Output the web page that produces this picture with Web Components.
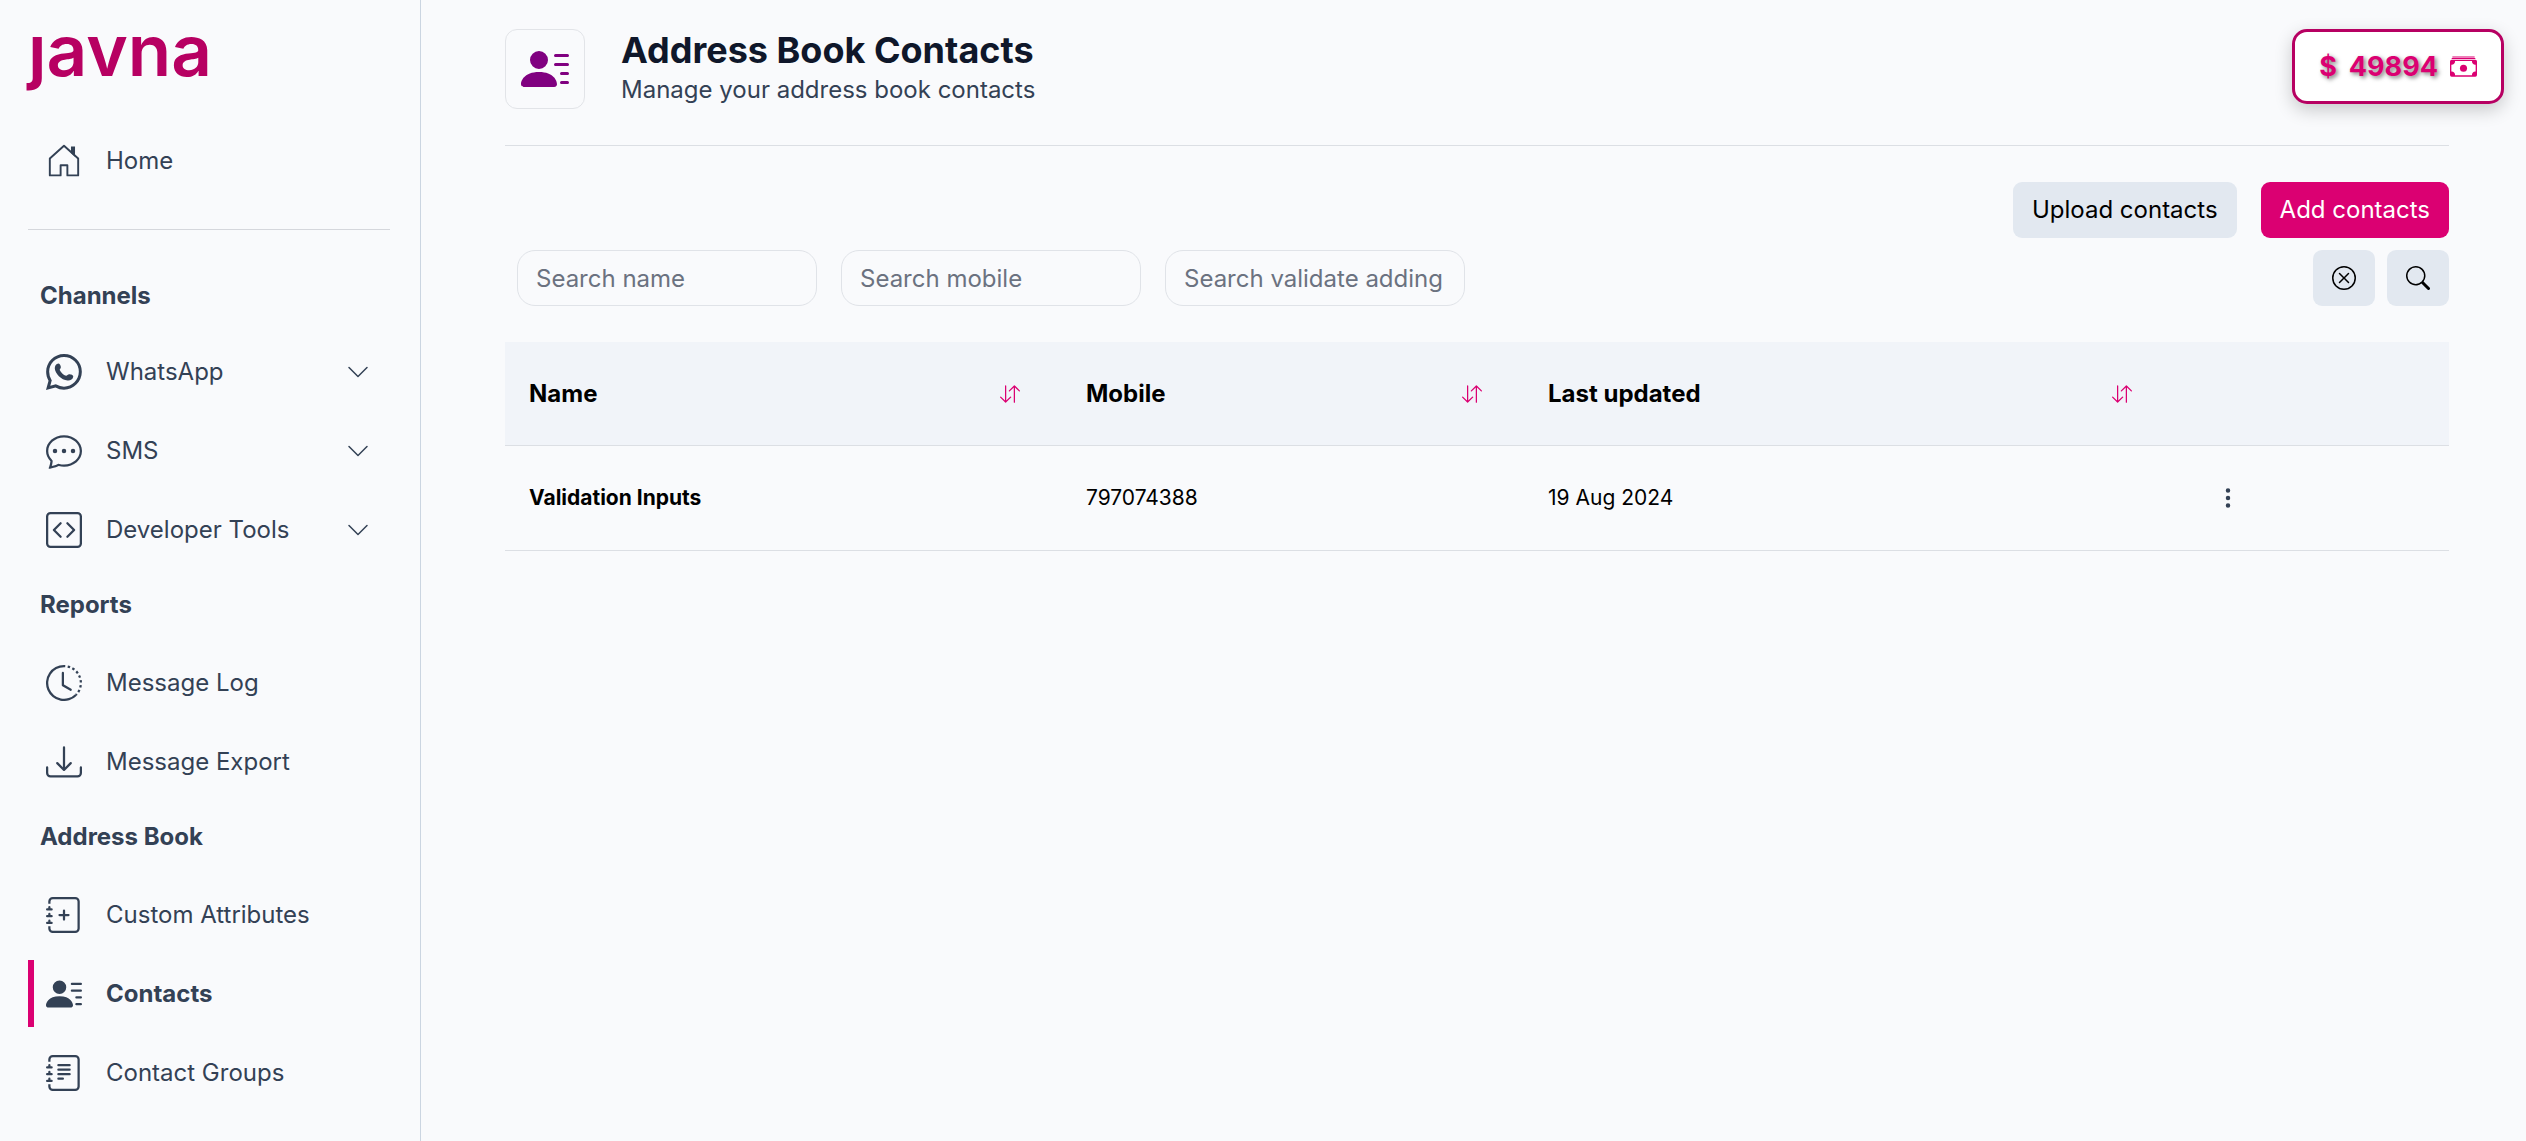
<!DOCTYPE html>
<html lang="en">
<head>
<meta charset="utf-8">
<title>Address Book Contacts</title>
<style>
  :root {
    --ink: #334155;
    --line: #dcdfe4;
    --pink: #db0072;
    --berry: #b70062;
    --soft: #e2e8f0;
  }
  body {
    margin: 0;
    background: #f9fafc;
    color: var(--ink);
    font: 400 24px/36px Inter, "Liberation Sans", sans-serif;
  }
</style>
</head>
<body>
<app-shell>
  <side-nav slot="nav">
    <nav-item icon="home" slot="home">Home</nav-item>
    <nav-group heading="Channels">
      <nav-item icon="whatsapp" expandable>WhatsApp</nav-item>
      <nav-item icon="chat" expandable>SMS</nav-item>
      <nav-item icon="code" expandable>Developer Tools</nav-item>
    </nav-group>
    <nav-group heading="Reports">
      <nav-item icon="history">Message Log</nav-item>
      <nav-item icon="download">Message Export</nav-item>
    </nav-group>
    <nav-group heading="Address Book">
      <nav-item icon="journal-plus">Custom Attributes</nav-item>
      <nav-item icon="person" active>Contacts</nav-item>
      <nav-item icon="journal-text">Contact Groups</nav-item>
    </nav-group>
  </side-nav>
  <page-header icon="person">
    <span slot="title">Address Book Contacts</span>
    <span slot="subtitle">Manage your address book contacts</span>
  </page-header>
  <contact-toolbar></contact-toolbar>
  <contact-table></contact-table>
</app-shell>
<balance-badge>49894</balance-badge>

<script>
const ICONS = {
  home: '<path fill="none" stroke="currentColor" stroke-width=".85" stroke-linejoin="round" d="M1.7 6.9v7.5h4.8V9.9h3v4.5h4.8V6.9L8 1.2z"/><path d="M11.1 1.6h1.8v4.5l-1.8-1.7z"/>',
  whatsapp: '<path d="M13.601 2.326A7.854 7.854 0 0 0 7.994 0C3.627 0 .068 3.558.064 7.926c0 1.399.366 2.76 1.057 3.965L0 16l4.204-1.102a7.933 7.933 0 0 0 3.79.965h.004c4.368 0 7.926-3.558 7.93-7.93A7.898 7.898 0 0 0 13.6 2.326zM7.994 14.521a6.573 6.573 0 0 1-3.356-.92l-.24-.144-2.494.654.666-2.433-.156-.251a6.56 6.56 0 0 1-1.007-3.505c0-3.626 2.957-6.584 6.591-6.584a6.56 6.56 0 0 1 4.66 1.931 6.557 6.557 0 0 1 1.928 4.66c-.004 3.639-2.961 6.592-6.592 6.592z"/><path d="M5.2 4.3C6 4.1 6.6 5.200 6.600 5.900c0 .6-.5.8-.5 1.200.5 1.100 1.600 2.200 2.800 2.600.4.100.8-.7 1.400-.7.800 0 2 .4 1.800 1.100-.2 1.200-1.300 1.800-2.500 1.700C6.800 11.500 4 8.700 3.900 6.300c0-1 .5-1.800 1.300-2z"/>',
  chat: '<path d="M5 8a1 1 0 1 1-2 0 1 1 0 0 1 2 0zm4 0a1 1 0 1 1-2 0 1 1 0 0 1 2 0zm3 1a1 1 0 1 0 0-2 1 1 0 0 0 0 2z"/><path d="m2.165 15.803.02-.004c1.830-.363 2.948-.842 3.468-1.105A9.060 9.060 0 0 0 8 15c4.418 0 8-3.134 8-7s-3.582-7-8-7-8 3.134-8 7c0 1.760.743 3.370 1.970 4.600a10.437 10.437 0 0 1-.524 2.318l-.003.011a10.722 10.722 0 0 1-.244.637c-.079.186.074.394.273.362a21.673 21.673 0 0 0 .693-.125zm.800-3.108a1 1 0 0 0-.287-.801C1.618 10.830 1 9.468 1 8c0-3.192 3.004-6 7-6s7 2.808 7 6c0 3.193-3.004 6-7 6a8.060 8.060 0 0 1-2.088-.272 1 1 0 0 0-.711.074c-.387.196-1.240.570-2.634.893a10.970 10.970 0 0 0 .398-2z"/>',
  code: '<path d="M14 1a1 1 0 0 1 1 1v12a1 1 0 0 1-1 1H2a1 1 0 0 1-1-1V2a1 1 0 0 1 1-1h12zM2 0a2 2 0 0 0-2 2v12a2 2 0 0 0 2 2h12a2 2 0 0 0 2-2V2a2 2 0 0 0-2-2H2z"/><path d="M6.854 4.646a.5.5 0 0 1 0 .708L4.207 8l2.647 2.646a.5.5 0 0 1-.708.708l-3-3a.5.5 0 0 1 0-.708l3-3a.5.5 0 0 1 .708 0zm2.292 0a.5.5 0 0 0 0 .708L11.793 8l-2.647 2.646a.5.5 0 0 0 .708.708l3-3a.5.5 0 0 0 0-.708l-3-3a.5.5 0 0 0-.708 0z"/>',
  history: '<path d="M8.515 1.019A7 7 0 0 0 8 1V0a8 8 0 0 1 .589.022l-.074.997zm2.004.450a7.003 7.003 0 0 0-.985-.299l.219-.976c.383.086.760.200 1.126.342l-.360.933zm1.370.710a7.010 7.010 0 0 0-.439-.270l.493-.870a8.025 8.025 0 0 1 .979.654l-.615.789a6.996 6.996 0 0 0-.418-.302zm1.834 1.790a6.990 6.990 0 0 0-.653-.796l.724-.690c.270.285.520.590.747.910l-.818.576zm.744 1.352a7.080 7.080 0 0 0-.214-.468l.893-.450a7.976 7.976 0 0 1 .450 1.088l-.950.313a7.023 7.023 0 0 0-.179-.483zm.530 2.507a6.991 6.991 0 0 0-.100-1.025l.985-.170c.067.386.106.778.116 1.170l-1 .025zm-.131 1.538c.033-.170.060-.339.081-.510l.993.123a7.957 7.957 0 0 1-.230 1.155l-.964-.267c.046-.165.086-.332.120-.501zm-.952 2.379c.184-.290.346-.594.486-.908l.914.405c-.160.360-.345.706-.555 1.038l-.845-.535zm-.964 1.205c.122-.122.239-.248.350-.378l.758.653a8.073 8.073 0 0 1-.401.432l-.707-.707z"/><path d="M8 1a7 7 0 1 0 4.950 11.950l.707.707A8.001 8.001 0 1 1 8 0v1z"/><path d="M7.500 3a.5.5 0 0 1 .5.500v5.210l3.248 1.856a.5.5 0 0 1-.496.868l-3.500-2A.5.5 0 0 1 7 9V3.500a.5.5 0 0 1 .5-.5z"/>',
  download: '<path d="M.5 9.900a.5.5 0 0 1 .5.500v2.500a1 1 0 0 0 1 1h12a1 1 0 0 0 1-1v-2.500a.5.5 0 0 1 1 0v2.500a2 2 0 0 1-2 2H2a2 2 0 0 1-2-2v-2.500a.5.5 0 0 1 .5-.5z"/><path d="M7.646 11.854a.5.5 0 0 0 .708 0l3-3a.5.5 0 0 0-.708-.708L8.500 10.293V1.500a.5.5 0 0 0-1 0v8.793L5.354 8.146a.5.5 0 1 0-.708.708l3 3z"/>',
  journal: '<path d="M3 0h10a2 2 0 0 1 2 2v12a2 2 0 0 1-2 2H3a2 2 0 0 1-2-2v-1h1v1a1 1 0 0 0 1 1h10a1 1 0 0 0 1-1V2a1 1 0 0 0-1-1H3a1 1 0 0 0-1 1v1H1V2a2 2 0 0 1 2-2z"/><path d="M1 5v-.5a.5.5 0 0 1 1 0V5h.5a.5.5 0 0 1 0 1h-2a.5.5 0 0 1 0-1H1zm0 3v-.5a.5.5 0 0 1 1 0V8h.5a.5.5 0 0 1 0 1h-2a.5.5 0 0 1 0-1H1zm0 3v-.5a.5.5 0 0 1 1 0v.5h.5a.5.5 0 0 1 0 1h-2a.5.5 0 0 1 0-1H1z"/>',
  person: '<path d="M6 8a3 3 0 1 0 0-6 3 3 0 0 0 0 6zm-5 6s-1 0-1-1 1-4 6-4 6 3 6 4-1 1-1 1H1zM11 3.500a.5.5 0 0 1 .5-.5h4a.5.5 0 0 1 0 1h-4a.5.5 0 0 1-.5-.5zm.5 2.500a.5.5 0 0 0 0 1h4a.5.5 0 0 0 0-1h-4zm2 3a.5.5 0 0 0 0 1h2a.5.5 0 0 0 0-1h-2zm0 3a.5.5 0 0 0 0 1h2a.5.5 0 0 0 0-1h-2z"/>',
  chevron: '<path d="M1.646 4.646a.5.5 0 0 1 .708 0L8 10.293l5.646-5.647a.5.5 0 0 1 .708.708l-6 6a.5.5 0 0 1-.708 0l-6-6a.5.5 0 0 1 0-.708z"/>',
  clear: '<path d="M8 15A7 7 0 1 1 8 1a7 7 0 0 1 0 14zm0 1A8 8 0 1 0 8 0a8 8 0 0 0 0 16z"/><path d="M4.646 4.646a.5.5 0 0 1 .708 0L8 7.293l2.646-2.647a.5.5 0 0 1 .708.708L8.707 8l2.647 2.646a.5.5 0 0 1-.708.708L8 8.707l-2.646 2.647a.5.5 0 0 1-.708-.708L7.293 8 4.646 5.354a.5.5 0 0 1 0-.708z"/>',
  search: '<path d="M11.742 10.344a6.500 6.500 0 1 0-1.397 1.398h-.001c.030.040.062.078.098.115l3.850 3.850a1 1 0 0 0 1.415-1.414l-3.850-3.850a1.007 1.007 0 0 0-.115-.100zM12 6.500a5.500 5.500 0 1 1-11 0 5.500 5.500 0 0 1 11 0z"/>',
  sort: '<path d="M11.500 15a.5.5 0 0 0 .5-.5V2.707l3.146 3.147a.5.5 0 0 0 .708-.708l-4-4a.5.5 0 0 0-.708 0l-4 4a.5.5 0 1 0 .708.708L11 2.707V14.500a.5.5 0 0 0 .5.500zm-7-14a.5.5 0 0 1 .5.500v11.793l3.146-3.147a.5.5 0 0 1 .708.708l-4 4a.5.5 0 0 1-.708 0l-4-4a.5.5 0 0 1 .708-.708L4 13.293V1.500a.5.5 0 0 1 .5-.5z"/>',
  dots: '<path d="M9.500 13a1.500 1.500 0 1 1-3 0 1.500 1.500 0 0 1 3 0zm0-5a1.500 1.500 0 1 1-3 0 1.500 1.500 0 0 1 3 0zm0-5a1.500 1.500 0 1 1-3 0 1.500 1.500 0 0 1 3 0z"/>',
  cash: '<path d="M1.400 2h13.200v.600H1.400zM1 3h14v.500H1z"/><path fill-rule="evenodd" d="M1 4h14a1 1 0 0 1 1 1v8a1 1 0 0 1-1 1H1a1 1 0 0 1-1-1V5a1 1 0 0 1 1-1zm2 .800A2 2 0 0 1 .8 7v4A2 2 0 0 1 3 13.200h10A2 2 0 0 1 15.200 11V7A2 2 0 0 1 13 4.800z"/><circle cx="8" cy="9" r="2.100"/>'
};
ICONS['journal-plus'] = ICONS.journal + '<path d="M8 5.500a.5.5 0 0 1 .5.500v1.500H10a.5.5 0 0 1 0 1H8.500V10a.5.5 0 0 1-1 0V8.500H6a.5.5 0 0 1 0-1h1.500V6a.5.5 0 0 1 .5-.5z"/>';
ICONS['journal-text'] = ICONS.journal + '<path d="M5 10.500a.5.5 0 0 1 .5-.5h2a.5.5 0 0 1 0 1h-2a.5.5 0 0 1-.5-.5zm0-2a.5.5 0 0 1 .5-.5h5a.5.5 0 0 1 0 1h-5a.5.5 0 0 1-.5-.5zm0-2a.5.5 0 0 1 .5-.5h5a.5.5 0 0 1 0 1h-5a.5.5 0 0 1-.5-.5zm0-2a.5.5 0 0 1 .5-.5h5a.5.5 0 0 1 0 1h-5a.5.5 0 0 1-.5-.5z"/>';

class BaseElement extends HTMLElement {
  constructor() {
    super();
    this.attachShadow({ mode: 'open' });
  }
  connectedCallback() {
    this.shadowRoot.innerHTML = '<style>*{box-sizing:border-box}</style>' + this.render();
  }
}

customElements.define('ui-icon', class extends BaseElement {
  render() {
    return `<style>:host{display:block;flex:none;width:24px;height:24px}svg{display:block;width:100%;height:100%}</style>
      <svg viewBox="0 0 16 16" fill="currentColor" aria-hidden="true">${ICONS[this.getAttribute('name')]}</svg>`;
  }
});

customElements.define('app-shell', class extends BaseElement {
  render() {
    return `<style>
      :host{display:flex;min-height:100vh}
      main{flex:1;min-width:0;padding:29px 77px 0 84px}
    </style>
    <slot name="nav"></slot><main><slot></slot></main>`;
  }
});

customElements.define('side-nav', class extends BaseElement {
  render() {
    return `<style>
      :host{display:block;box-sizing:border-box;flex:none;width:421px;padding:20px 30px 20px 28px;border-right:1px solid #cbd5e1}
      .logo{display:block;color:var(--berry);font-size:71px;font-weight:600;line-height:60px;text-decoration:none}
      .home{margin-top:47px}
      hr{border:0;border-top:1px solid #d5d7dc;margin:35px 0 0}
    </style>
    <a class="logo" href="#" aria-label="javna">ȷavna</a>
    <div class="home"><slot name="home"></slot></div>
    <hr>
    <nav><slot></slot></nav>`;
  }
});

customElements.define('nav-group', class extends BaseElement {
  render() {
    return `<style>
      :host{display:block;margin-top:24px}
      :host(:first-of-type){margin-top:48px}
      h2{margin:0 0 26px;padding-left:12px;font-size:24px;line-height:36px;font-weight:700}
      :host(:first-of-type) h2{margin-bottom:24px}
      div{display:flex;flex-direction:column;gap:12px}
    </style>
    <h2>${this.getAttribute('heading')}</h2><div><slot></slot></div>`;
  }
});

customElements.define('nav-item', class extends BaseElement {
  render() {
    const inner = `<ui-icon class="lead" name="${this.getAttribute('icon')}"></ui-icon><span><slot></slot></span>`;
    return `<style>
      :host{display:block}
      a,button{display:flex;align-items:center;gap:24px;width:100%;height:67px;padding:0 20px 0 12px;border:0;border-left:6px solid transparent;background:none;color:inherit;font:inherit;text-align:left;text-decoration:none}
      span{flex:1}
      .lead{width:36px;height:36px}
      :host([active]) a{border-color:var(--pink);font-weight:700}
    </style>` + (this.hasAttribute('expandable')
      ? `<button type="button" aria-expanded="false">${inner}<ui-icon name="chevron"></ui-icon></button>`
      : `<a href="#">${inner}</a>`);
  }
});

customElements.define('page-header', class extends BaseElement {
  render() {
    return `<style>
      :host{display:flex;gap:36px;padding-bottom:36px;border-bottom:1px solid var(--line)}
      .tile{display:grid;place-items:center;width:80px;height:80px;border:1px solid #e2e4e8;border-radius:12px;color:#800080}
      .tile ui-icon{width:48px;height:48px}
      h1{margin:0;color:#0f172a;font-size:36px;line-height:42px;font-weight:700}
      p{margin:0;line-height:38px}
    </style>
    <div class="tile"><ui-icon name="${this.getAttribute('icon')}"></ui-icon></div>
    <div><h1><slot name="title"></slot></h1><p><slot name="subtitle"></slot></p></div>`;
  }
});

customElements.define('contact-toolbar', class extends BaseElement {
  render() {
    const field = label => `<input type="text" aria-label="${label}" placeholder="${label}">`;
    return `<style>
      :host{display:flex;flex-direction:column;gap:12px;margin:36px 0}
      .row{display:flex;justify-content:flex-end;gap:24px}
      .filters{justify-content:space-between;padding-left:12px}
      .fields{display:flex;gap:24px}
      .icons{display:flex;gap:12px}
      button{height:56px;padding:0 19px;border:0;border-radius:9px;background:var(--soft);color:#000;font:inherit}
      .primary{background:var(--pink);color:#fff}
      input{width:300px;height:56px;padding:0 18px;border:1px solid #e0e3e8;border-radius:18px;background:transparent;color:inherit;font:inherit}
      input::placeholder{color:#6b7280;opacity:1}
    </style>
    <div class="row"><button type="button">Upload contacts</button><button type="button" class="primary">Add contacts</button></div>
    <div class="row filters">
      <div class="fields">${field('Search name')}${field('Search mobile')}${field('Search validate adding')}</div>
      <div class="icons">
        <button type="button" aria-label="Clear"><ui-icon name="clear"></ui-icon></button>
        <button type="button" aria-label="Search"><ui-icon name="search"></ui-icon></button>
      </div>
    </div>`;
  }
});

customElements.define('contact-table', class extends BaseElement {
  render() {
    const head = (cls, label) => `<th class="${cls}" scope="col"><div><span>${label}</span><button type="button" aria-label="Sort by ${label}"><ui-icon name="sort"></ui-icon></button></div></th>`;
    return `<style>
      :host{display:block}
      table{width:100%;table-layout:fixed;border-spacing:0;color:#000;text-align:left}
      th,td{padding:0 24px;border-bottom:1px solid var(--line)}
      thead{background:#f1f4f9}
      th{height:104px;font-size:24px;font-weight:700}
      thead div{display:flex;align-items:center;justify-content:space-between;padding-right:18px}
      tbody td,tbody th{height:105px;font-size:21px;line-height:30px}
      .name{width:28.65%}.mobile{width:23.77%}.updated{width:33.44%}
      button{display:block;padding:0;border:0;background:none;color:var(--pink)}
      thead ui-icon{width:20px;height:20px}
      .menu{padding:0 18px;color:var(--ink)}
    </style>
    <table>
      <thead><tr>${head('name', 'Name')}${head('mobile', 'Mobile')}${head('updated', 'Last updated')}<td></td></tr></thead>
      <tbody><tr><th scope="row">Validation Inputs</th><td>797074388</td><td>19 Aug 2024</td>
        <td><button type="button" class="menu" aria-label="Row actions"><ui-icon name="dots"></ui-icon></button></td></tr></tbody>
    </table>`;
  }
});

customElements.define('balance-badge', class extends BaseElement {
  render() {
    return `<style>
      :host{position:absolute;top:29px;right:22px;display:flex;align-items:center;gap:12px;height:75px;box-sizing:border-box;padding:0 24px;border:3px solid var(--berry);border-radius:15px;background:#fff;color:var(--pink);font-size:27px;line-height:36px;font-weight:700;box-shadow:0 6px 18px rgba(0,0,0,.2)}
      span{text-shadow:2px 2px 4px rgba(0,0,0,.5)}
      ui-icon{width:27px;height:27px}
    </style>
    <span>$</span><span><slot></slot></span><ui-icon name="cash"></ui-icon>`;
  }
});
</script>
</body>
</html>
